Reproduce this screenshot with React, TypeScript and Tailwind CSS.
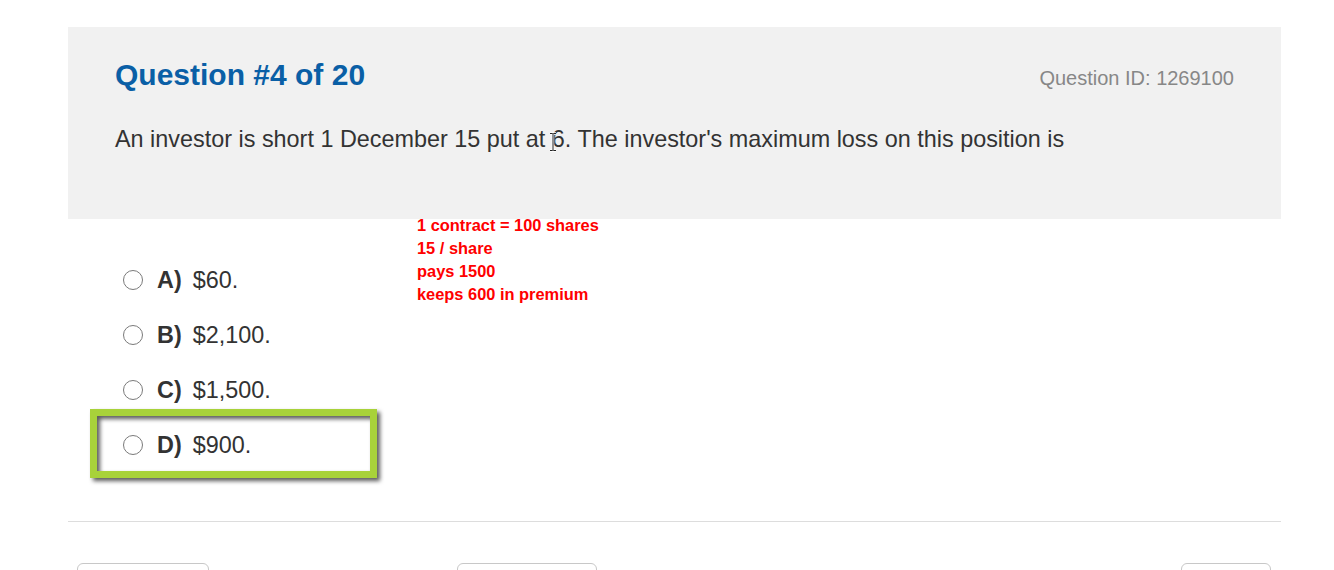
import React from 'react';

const options = [
  { key: 'A)', value: '$60.' },
  { key: 'B)', value: '$2,100.' },
  { key: 'C)', value: '$1,500.' },
  { key: 'D)', value: '$900.' },
];

const notes = ['1 contract = 100 shares', '15 / share', 'pays 1500', 'keeps 600 in premium'];

export default function App() {
  return (
    <div
      className="relative w-[1334px] h-[570px] overflow-hidden bg-white"
      style={{ fontFamily: '"Liberation Sans", Arial, sans-serif' }}
    >
      <div className="ml-[68px] w-[1213px] pt-[27px]">
        {/* question header */}
        <div className="h-[192px] bg-[#f1f1f1] px-[47px] pt-[30px]">
          <div className="flex items-baseline justify-between">
            <h1 className="text-[30px] leading-[36px] font-bold text-[#0a5fa6]">Question #4 of 20</h1>
            <span className="text-[20px] leading-[24px] text-[#878787]">Question ID: 1269100</span>
          </div>
          <p className="mt-[30px] text-[23.4px] leading-[32px] text-[#333333]">
            An investor is short 1 December 15 put at 6. The investor's maximum loss on this position is
          </p>
        </div>

        {/* answers */}
        <div className="mt-[33px] pl-[55px] flex flex-col">
          {options.map((o) => (
            <div key={o.key} className="h-[55px] flex items-center">
              <span className="w-[20px] h-[20px] rounded-full border-[1.5px] border-[#7a7a7a] bg-white" />
              <span className="ml-[14px] text-[23.4px] leading-[32px] font-bold text-[#333333]">{o.key}</span>
              <span className="ml-[11px] text-[23.4px] leading-[32px] text-[#333333]">{o.value}</span>
            </div>
          ))}
        </div>

        <div className="mt-[49px] h-px bg-[#dddddd]" />

        <div className="mt-[41px] flex">
          <div className="ml-[9px] w-[132px] h-[38px] rounded-md border border-[#c8c8c8]" />
          <div className="ml-[248px] w-[140px] h-[38px] rounded-md border border-[#c8c8c8]" />
          <div className="ml-auto mr-[10px] w-[90px] h-[38px] rounded-md border border-[#c8c8c8]" />
        </div>
      </div>

      {/* red annotation notes */}
      <div className="absolute left-[417px] top-[214px] text-[16.4px] leading-[23px] font-bold text-[#ff0000]">
        {notes.map((n) => (
          <div key={n}>{n}</div>
        ))}
      </div>

      {/* green highlight box */}
      <div className="absolute left-[90px] top-[409px] w-[287px] h-[69px] border-[7px] border-[#a8d23a] drop-shadow-[3px_3px_2px_rgba(0,0,0,0.65)]" />

      {/* text cursor */}
      <svg className="absolute left-[548px] top-[132px]" width="10" height="20" viewBox="0 0 10 20">
        <path d="M2 1.5h2.5L5 2l.5-.5H8M5 2v16M2 18.5h2.5L5 18l.5.5H8" fill="none" stroke="#ffffff" strokeWidth="2.5" />
        <path d="M2 1.5h2.5L5 2l.5-.5H8M5 2v16M2 18.5h2.5L5 18l.5.5H8" fill="none" stroke="#222222" strokeWidth="1" />
      </svg>
    </div>
  );
}
